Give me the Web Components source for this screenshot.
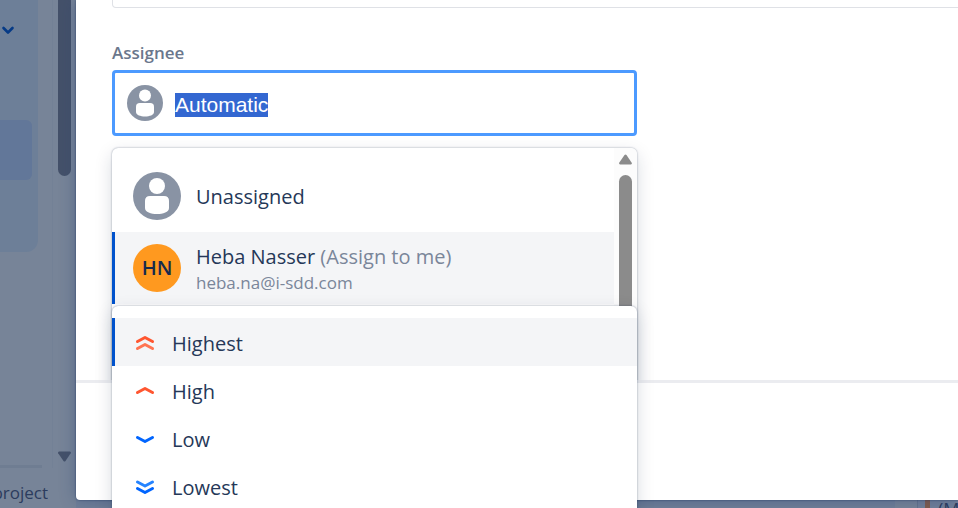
<!DOCTYPE html>
<html lang="en">
<head>
<meta charset="utf-8">
<title>Create issue</title>
<style>
html, body { margin: 0; height: 100%; overflow: hidden; }
body { font-family: "Open Sans", "Noto Sans", sans-serif; font-size: 20px; color: #253858; background: #778498; }
</style>
</head>
<body>
<app-page>
  <side-nav slot="nav"></side-nav>
  <board-strip slot="board"></board-strip>
  <modal-dialog slot="modal">
    <assignee-field>
      <option-menu scrolls label="Assignee options">
        <user-option name="Unassigned"></user-option>
        <user-option name="Heba Nasser" note="(Assign to me)" mail="heba.na@i-sdd.com" initials="HN" active></user-option>
      </option-menu>
    </assignee-field>
    <option-menu slot="popup" label="Priority options">
      <priority-option level="highest" active>Highest</priority-option>
      <priority-option level="high">High</priority-option>
      <priority-option level="low">Low</priority-option>
      <priority-option level="lowest">Lowest</priority-option>
    </option-menu>
  </modal-dialog>
</app-page>
<script>
const define = (name, html, setup) => customElements.define(name, class extends HTMLElement {
  connectedCallback() {
    if (this.shadowRoot) return;
    const root = this.attachShadow({ mode: 'open' });
    root.innerHTML = typeof html === 'function' ? html(this) : html;
    if (setup) setup(root, this);
  }
});

define('app-page', `<style>
:host { display: grid; grid-template-columns: 76px 1fr; height: 100vh; position: relative; overflow: hidden; background: #778498; }
slot[name=modal]::slotted(*) { position: absolute; top: 0; right: 0; bottom: 8px; left: 76px; }
</style><slot name="nav"></slot><slot name="board"></slot><slot name="modal"></slot>`);

define('side-nav', `<style>
:host { display: grid; grid-template-columns: 1fr 24px; grid-template-rows: 1fr 40px; overflow: hidden; }
nav { display: flex; flex-direction: column; justify-content: space-between; }
.panel { width: 38px; height: 252px; box-sizing: border-box; border-radius: 0 0 12px 0; background: #6d7f98; display: flex; flex-direction: column; }
button { all: unset; width: 16px; height: 20px; margin: 20px 0 80px; display: grid; place-items: center; }
svg { display: block; }
.current { width: 32px; height: 60px; border-radius: 0 6px 6px 0; background: #627799; }
.line { width: 42px; height: 3px; background: #6f7d92; }
.rail { display: flex; flex-direction: column; justify-content: space-between; align-items: center; padding-bottom: 6px; border-left: 1px solid #738196; }
.thumb { width: 13px; height: 176px; border-radius: 0 0 7px 7px; background: #44516a; }
footer { grid-column: 1 / 3; width: 48px; display: flex; justify-content: flex-end; font-size: 17px; line-height: 24px; padding-top: 13px; box-sizing: border-box; overflow: hidden; color: #2c3c5e; }
</style>
<nav aria-label="Project"><div class="panel"><button aria-label="Expand"><svg width="14" height="10" viewBox="0 0 14 10" fill="none" stroke="#053a86" stroke-width="2.600" stroke-linecap="round" stroke-linejoin="round"><path d="M2.5 3 7 7.500 11.500 3"/></svg></button><div class="current"></div></div><div class="line"></div></nav>
<div class="rail"><div class="thumb"></div><svg width="15" height="11" viewBox="0 0 15 11"><path d="M2 .5h11q1.500.500.700 1.800L8.500 10q-1 1-2 0L1.200 2.300Q.500 1 2 .5" fill="#44516a"/></svg></div>
<footer>project</footer>`);

define('board-strip', `<style>
:host { display: flex; align-items: flex-end; justify-content: flex-end; overflow: hidden; background: #707f98; }
.gap { width: 22px; height: 8px; background: #778498; border-right: 1px solid #65748d; }
.card { width: 40px; height: 9px; overflow: hidden; display: flex; background: #72809a; color: #2c3c5e; font-size: 18px; line-height: 20px; }
i { width: 5px; height: 9px; margin: 0 8px 0 7px; background: #825c4d; flex: none; }
</style><div class="gap"></div><div class="card"><i></i><span>(M</span></div>`);

define('modal-dialog', `<style>
:host { display: flex; flex-direction: column; background: #fff; border-radius: 0 0 0 4px; box-shadow: 0 0 2px #0f2650b0, 0 0 16px #253f7070; }
.body { flex: 1; min-height: 0; overflow: hidden; display: flex; flex-direction: column; padding: 0 36px; }
.desc { display: grid; margin: 0 -36px 35px 0; overflow: hidden; flex: none; }
textarea { height: 8px; box-sizing: border-box; display: block; width: calc(100% + 8px); margin: 0; padding: 0; border: 1px solid #dfe1e6; border-top: 0; border-radius: 0 0 4px 4px; background: #fff; resize: none; overflow: hidden; }
footer { height: 117px; border-top: 3px solid #ebecf0; flex: none; }
slot[name=popup]::slotted(*) { position: absolute; left: 36px; top: 306px; width: 525px; height: 230px; }
</style>
<div class="body"><div class="desc"><textarea aria-label="Description"></textarea></div><slot></slot></div><footer></footer><slot name="popup"></slot>`);

const person = s => `<svg width="${s}" height="${s}" viewBox="0 0 48 48" aria-hidden="true"><circle cx="24" cy="24" r="24" fill="#8993a4"/><circle cx="24" cy="14" r="8" fill="#fff"/><path d="M12 29q0-5 5-5h14q5 0 5 5v7c0 8-24 8-24 0z" fill="#fff"/></svg>`;

define('assignee-field', `<style>
:host { display: block; position: relative; width: 525px; max-width: 100%; }
label { display: block; font-size: 17px; line-height: 20px; margin-bottom: 7px; font-weight: 600; color: #6b778c; }
.box { display: flex; align-items: center; gap: 12px; height: 66px; box-sizing: border-box; border: 3px solid #4c9aff; border-radius: 4px; padding: 0 12px; background: #fff; }
svg { display: block; flex: none; }
input { flex: 1; min-width: 0; margin: 0; padding: 4px 0 0; border: 0; outline: 0; background: transparent; color: #253858; font: 21px/24px "Liberation Sans", Arial, sans-serif; }
input::selection { background: #3367d1; color: #fff; }
::slotted(*) { position: absolute; left: 0; right: 0; top: 105px; height: 246px; }
</style><label for="who">Assignee</label><div class="box">${person(36)}<input id="who" value="Automatic" autocomplete="off" spellcheck="false"></div><slot></slot>`,
root => { const i = root.querySelector('input'); i.focus(); i.select(); });

define('option-menu', el => `<style>
:host { display: flex; box-sizing: border-box; overflow: hidden; border-radius: 6px; background: #fff; box-shadow: 0 0 2px #091e4270, 0 6px 18px #091e4228; }
.list { flex: 1; min-width: 0; padding: 12px 0; }
.rail { width: 23px; background: #fcfcfc; display: flex; flex-direction: column; align-items: center; gap: 10px; padding-top: 6px; box-sizing: border-box; }
.thumb { width: 13px; flex: 1; border-radius: 7px; background: #8b8b8b; }
svg { display: block; flex: none; }
</style><div class="list" role="listbox" aria-label="${el.getAttribute('label')}"><slot></slot></div>${el.hasAttribute('scrolls') ? '<div class="rail"><svg width="15" height="11" viewBox="0 0 15 11"><path d="M2 10.500h11q1.500-.500.700-1.800L8.500 1q-1-1-2 0L1.200 8.700Q.500 10 2 10.500" fill="#8b8b8b"/></svg><div class="thumb"></div></div>' : ''}`);

const optionCss = `:host { display: block; }
button { appearance: none; display: flex; align-items: center; width: 100%; box-sizing: border-box; margin: 0; border: 0; border-left: 3px solid transparent; background: transparent; font: inherit; color: inherit; text-align: left; line-height: 28px; }
:host([active]) button { border-left-color: #0052cc; background: #f4f5f7; }
svg { display: block; flex: none; }`;

define('user-option', el => `<style>${optionCss}
button { height: 72px; padding: 0 18px; gap: 15px; }
.avatar { width: 48px; height: 48px; border-radius: 50%; background: #ff991f; color: #172b4d; font-size: 20px; font-weight: 600; display: grid; place-items: center; }
.text { display: grid; padding-top: 2px; }
.note, .mail { color: #7a869a; }
.mail { font-size: 17px; line-height: 24px; }
</style><button role="option" aria-selected="${el.hasAttribute('active')}">${el.getAttribute('initials') ? `<span class="avatar">${el.getAttribute('initials')}</span>` : person(48)}<span class="text"><span>${el.getAttribute('name')}${el.getAttribute('note') ? ` <span class="note">${el.getAttribute('note')}</span>` : ''}</span>${el.getAttribute('mail') ? `<span class="mail">${el.getAttribute('mail')}</span>` : ''}</span></button>`);

const marks = {
  highest: '<path stroke="#ff5630" d="m4.500 9.500 7.500-4 7.500 4"/><path stroke="#ff7452" d="m4.500 16.500 7.500-4 7.500 4"/>',
  high: '<path stroke="#ff5630" d="m4.500 12.500 7.500-4 7.500 4"/>',
  low: '<path stroke="#0065ff" d="m4.500 9.500 7.500 4 7.500-4"/>',
  lowest: '<path stroke="#2684ff" d="m4.500 6 7.500 4 7.500-4"/><path stroke="#0065ff" d="m4.500 12.500 7.500 4 7.500-4"/>'
};
define('priority-option', el => `<style>${optionCss}
button { height: 48px; padding: 4px 18px 0; gap: 15px; }
</style><button role="option" aria-selected="${el.hasAttribute('active')}"><svg width="24" height="24" viewBox="0 0 24 24" fill="none" stroke-width="3" stroke-linecap="round" stroke-linejoin="round" aria-hidden="true">${marks[el.getAttribute('level')]}</svg><slot></slot></button>`);
</script>
</body>
</html>
